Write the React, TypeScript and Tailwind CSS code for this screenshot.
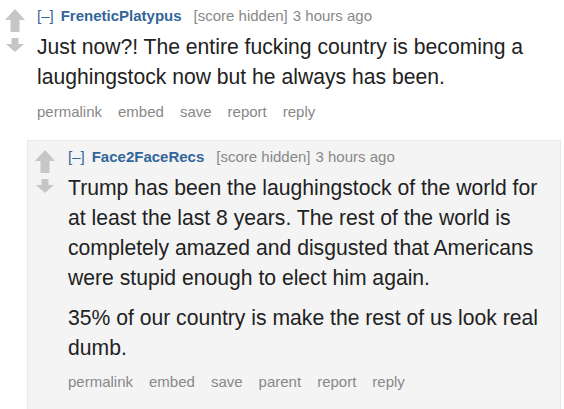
import React from "react";

const UpArrow = () => (
  <svg width="20" height="23" viewBox="0 0 20 23" className="block">
    <polygon points="10,0 20,11 14.5,11 14.5,23 5.5,23 5.5,11 0,11" fill="#c6c6c6" />
  </svg>
);

const DownArrow = () => (
  <svg width="20" height="14" viewBox="0 0 20 14" className="block">
    <polygon points="6.5,0 13.5,0 13.5,6 19,6 10,14 1,6 6.5,6" fill="#c6c6c6" />
  </svg>
);

const Votes = () => (
  <div className="flex flex-col items-start w-[20px] shrink-0">
    <UpArrow />
    <div className="h-[6px]" />
    <DownArrow />
  </div>
);

const Tagline = ({ author }: { author: string }) => (
  <div className="flex items-center text-[15px] leading-[20px] h-[20px]">
    <span className="text-[#369]">[–]</span>
    <span className="ml-[7px] font-bold text-[#336699]">{author}</span>
    <span className="ml-[12px] text-[#888]">[score hidden]</span>
    <span className="ml-[5px] text-[#888]">3 hours ago</span>
  </div>
);

const Buttons = ({ items }: { items: string[] }) => (
  <div className="flex gap-[16px] text-[15px] leading-[20px] text-[#888]">
    {items.map((b) => (
      <span key={b}>{b}</span>
    ))}
  </div>
);

export default function App() {
  return (
    <div className="bg-white w-[564px] h-[409px] overflow-hidden font-['Liberation_Sans',Arial,sans-serif]">
      <div className="flex pt-[6px] pl-[5px]">
        <div className="pt-[3px] mr-[12px]">
          <Votes />
        </div>
        <div className="w-[510px]">
          <Tagline author="FreneticPlatypus" />
          <div className="mt-[6px] text-[21.15px] leading-[30px] text-[#222]">
            Just now?! The entire fucking country is becoming a laughingstock now but he always has been.
          </div>
          <div className="mt-[10px]">
            <Buttons items={["permalink", "embed", "save", "report", "reply"]} />
          </div>
        </div>
      </div>

      <div className="ml-[27px] mr-[3px] mt-[18px] bg-[#f4f4f4] border border-[#e8e8e8] h-[300px]">
        <div className="flex pt-[6px] pl-[7px]">
          <div className="pt-[3px] mr-[13px]">
            <Votes />
          </div>
          <div className="w-[484px]">
            <Tagline author="Face2FaceRecs" />
            <div className="mt-[6px] text-[21.15px] leading-[30px] text-[#222]">
              <p>
                Trump has been the laughingstock of the world for at least the last 8 years. The rest of the world is completely amazed and disgusted that Americans were stupid enough to elect him again.
              </p>
              <p className="mt-[10px]">35% of our country is make the rest of us look real dumb.</p>
            </div>
            <div className="mt-[9px]">
              <Buttons items={["permalink", "embed", "save", "parent", "report", "reply"]} />
            </div>
          </div>
        </div>
      </div>
    </div>
  );
}
